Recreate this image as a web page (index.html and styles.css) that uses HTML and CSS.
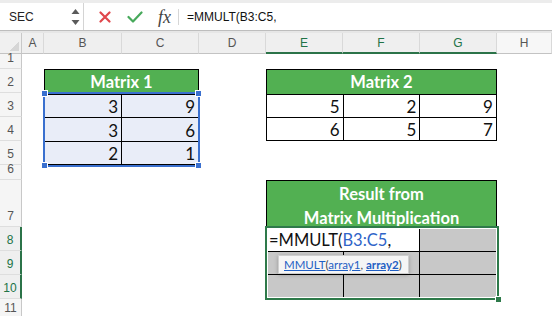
FILE: index.html
```html
<!DOCTYPE html>
<html>
<head>
<meta charset="utf-8">
<link rel="stylesheet" href="styles.css">
</head>
<body>
<div class="topstrip"></div>
<div class="toolbar">
  <div class="namebox">
    <span class="name">SEC</span>
    <svg class="spin" width="9" height="18" viewBox="0 0 9 18">
      <path d="M4.5 1 L8.5 6 L0.5 6 Z" fill="#5a5a5a"/>
      <path d="M4.5 17 L8.5 12 L0.5 12 Z" fill="#5a5a5a"/>
    </svg>
  </div>
  <svg class="cancel" width="12" height="12" viewBox="0 0 12 12">
    <path d="M1.5 1.5 L10.5 10.5 M10.5 1.5 L1.5 10.5" stroke="#e0474c" stroke-width="2.2" stroke-linecap="round"/>
  </svg>
  <svg class="enter" width="16" height="12" viewBox="0 0 16 12">
    <path d="M1.5 6 L6 10.5 L14.5 1.5" stroke="#47a95b" stroke-width="2.2" fill="none" stroke-linecap="round" stroke-linejoin="round"/>
  </svg>
  <span class="fx">fx</span>
  <span class="sep"></span>
  <span class="formula">=MMULT(B3:C5,</span>
</div>
<div class="gap"></div>
<div class="sheet">
  <div class="corner"></div>
  <div class="ch">A</div>
  <div class="ch">B</div>
  <div class="ch">C</div>
  <div class="ch">D</div>
  <div class="ch sel">E</div>
  <div class="ch sel">F</div>
  <div class="ch sel">G</div>
  <div class="ch light">H</div>

  <div class="rh">1</div>
  <div class="rh">2</div>
  <div class="rh">3</div>
  <div class="rh">4</div>
  <div class="rh">5</div>
  <div class="rh">6</div>
  <div class="rh">7</div>
  <div class="rh sel">8</div>
  <div class="rh sel">9</div>
  <div class="rh sel">10</div>
  <div class="rh last">11</div>

  <div class="tbl m1">
    <div class="hdr">Matrix 1</div>
    <div class="num">3</div><div class="num">9</div>
    <div class="num">3</div><div class="num">6</div>
    <div class="num">2</div><div class="num">1</div>
    <div class="blue-sel">
      <span class="hd tl"></span><span class="hd tr"></span>
      <span class="hd bl"></span><span class="hd br"></span>
    </div>
  </div>

  <div class="tbl m2">
    <div class="hdr">Matrix 2</div>
    <div class="num">5</div><div class="num">2</div><div class="num">9</div>
    <div class="num">6</div><div class="num">5</div><div class="num">7</div>
  </div>

  <div class="tbl res">
    <div class="hdr two">Result from<br>Matrix Multiplication</div>
    <div class="edit">=MMULT(<span class="ref">B3:C5</span>,</div>
    <div class="g"></div>
    <div class="g"></div><div class="g"></div><div class="g"></div>
    <div class="g"></div><div class="g"></div><div class="g"></div>
    <div class="green-sel"><span class="gh"></span></div>
    <div class="tip"><span class="lk">MMULT</span><span class="pn">(</span><span class="lk">array1</span><span class="pn">, </span><span class="lk b">array2</span><span class="pn">)</span></div>
  </div>
</div>
</body>
</html>
```
FILE: styles.css
```css
* { box-sizing: border-box; margin: 0; padding: 0; }
body {
  width: 552px; height: 316px; overflow: hidden; background: #fff;
  font-family: "Liberation Sans", Arial, sans-serif;
}
.topstrip { height: 3px; background: #ececec; }
.toolbar {
  height: 28px; display: flex; align-items: center;
  border-bottom: 1px solid #bdbdbd; background: #fff;
}
.gap { height: 2px; background: #e6e6e6; }
.namebox {
  width: 84px; height: 100%; border-right: 1px solid #d4d4d4;
  display: flex; align-items: center; justify-content: space-between;
  padding: 0 3px 0 9px;
}
.name { font-size: 12px; color: #222; }
.cancel { margin-left: 15px; }
.enter { margin-left: 16px; }
.fx {
  margin-left: 15px; font-family: "Liberation Serif", serif; font-style: italic;
  font-size: 18px; color: #444; line-height: 18px;
}
.sep { width: 1px; height: 16px; background: #d6d6d6; margin-left: 7px; }
.formula { margin-left: 8px; font-size: 12px; color: #111; }

.sheet {
  display: grid;
  grid-template-columns: 22px 22px 78px 77px 67px 77px 77px 77px 1fr;
  grid-template-rows: 21px 15px 24px 24px 24px 24px 15px 47px 24px 24px 24px 17px;
}
.corner {
  background: linear-gradient(135deg, transparent 60%, #d6d6d6 60%) no-repeat right 2px bottom 2px / 12px 12px, #f0f0f0;
  border-right: 1px solid #c8c8c8; border-bottom: 1px solid #c3c3c3;
}
.ch {
  background: #efefef; border-right: 1px solid #d9d9d9; border-bottom: 1px solid #c3c3c3;
  font-size: 12px; color: #555; display: flex; align-items: center; justify-content: center;
}
.ch.sel { color: #217346; border-bottom: 2px solid #2b7348; padding-top: 1px; }
.ch.light { background: #f7f7f7; }
.rh {
  grid-column: 1; background: #f5f5f5; border-right: 1px solid #c8c8c8;
  border-bottom: 1px solid #dedede; font-size: 12px; color: #555;
  display: flex; align-items: flex-end; justify-content: center;
  line-height: 16px; padding-bottom: 2px;
}
.rh.last { border-bottom: none; padding-bottom: 0; }
.rh.sel { color: #217346; border-right: 2px solid #2b7348; background: #efefef; }

.tbl {
  position: relative; display: grid; gap: 1px; background: #000; border: 1px solid #000;
  font-family: Lato, "Liberation Sans", sans-serif;
}
.hdr {
  grid-column: 1 / -1; background: #52b052; color: #fff; font-weight: bold;
  font-size: 16.5px; display: flex; align-items: center; justify-content: center;
  text-align: center; line-height: 24px;
}
.num {
  background: #fff; font-size: 17px; color: #111; line-height: 20px;
  display: flex; align-items: flex-end; justify-content: flex-end; padding-right: 3px;
}
.m1 { grid-column: 3 / 5; grid-row: 3 / 7; grid-template-columns: 1fr 1fr; grid-template-rows: repeat(4, 1fr); }
.m1 .num { background: #e9edf8; }
.m2 { grid-column: 6 / 9; grid-row: 3 / 6; grid-template-columns: repeat(3, 1fr); grid-template-rows: repeat(3, 1fr); }
.res { grid-column: 6 / 9; grid-row: 8 / 12; grid-template-columns: repeat(3, 1fr); grid-template-rows: 46px 1fr 1fr 1fr; }
.hdr.two { padding-top: 3px; }
.g { background: #c8c8c8; }
.edit {
  grid-column: 1 / 3; background: #fff; font-size: 16.5px; color: #111;
  line-height: 20px; padding-left: 2px; display: flex; align-items: flex-end; padding-bottom: 1px;
}
.ref { color: #2f64c8; }

.blue-sel {
  position: absolute; left: -2px; right: -2px; top: 22px; bottom: -3px;
  border: 2px solid #3a70cf;
}
.hd {
  position: absolute; width: 7px; height: 7px; background: #3a70cf; border: 1px solid #fff;
}
.hd.tl { left: -4px; top: -4px; }
.hd.tr { right: -4px; top: -4px; }
.hd.bl { left: -4px; bottom: -4px; }
.hd.br { right: -4px; bottom: -4px; }

.green-sel {
  position: absolute; left: -2px; right: -3px; top: 45px; bottom: -2px;
  border: 2px solid #2e7a4a; box-shadow: inset 0 0 0 1px #fff;
}
.gh {
  position: absolute; right: -5px; bottom: -5px; width: 7px; height: 7px;
  background: #2e7a4a; border: 1px solid #fff;
}
.tip {
  position: absolute; left: 11px; top: 74px; width: 131px; height: 19px;
  background: #f5f5f5; border: 1px solid #cfcfcf; box-shadow: 0 1px 4px rgba(0,0,0,0.25);
  font-size: 11.5px; line-height: 17px; padding-left: 5px; white-space: nowrap; color: #444;
}
.lk { color: #1f5fc4; text-decoration: underline; }
.lk.b { font-weight: bold; }
```
